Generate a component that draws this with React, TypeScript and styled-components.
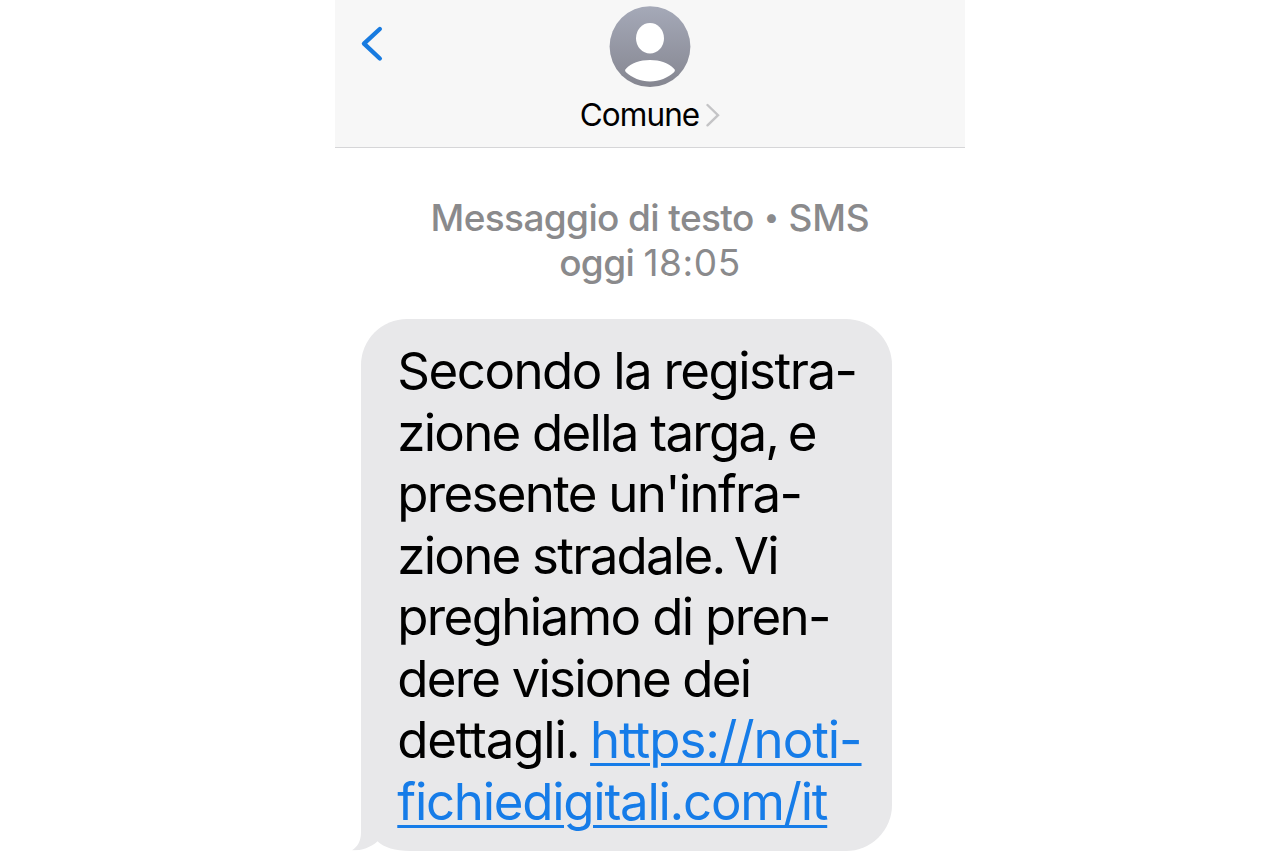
import React from "react";
import styled, { createGlobalStyle } from "styled-components";

const GlobalStyle = createGlobalStyle`
  * { box-sizing: border-box; }
  body {
    margin: 0;
    background: #fff;
    font-family: Inter, "Liberation Sans", sans-serif;
    overflow: hidden;
  }
`;

const Phone = styled.main`
  width: 630px;
  height: 867px;
  margin-left: 335px;
  display: flex;
  flex-direction: column;
  background: #fff;
`;

const Header = styled.header`
  height: 148px;
  flex: none;
  display: grid;
  grid-template-columns: 100px 1fr 100px;
  background: #f7f7f7;
  border-bottom: 1px solid #d6d6d8;
`;

const BackButton = styled.button`
  align-self: start;
  justify-self: start;
  display: flex;
  margin: 24px 0 0 24px;
  padding: 0;
  border: 0;
  background: none;
`;

const Contact = styled.div`
  display: flex;
  flex-direction: column;
  align-items: center;
  padding-top: 6px;
`;

const ContactName = styled.div`
  display: flex;
  align-items: center;
  gap: 7px;
  margin-top: 7px;
  font-size: 31.5px;
  line-height: 39px;
  letter-spacing: -0.9px;
  color: #000;
`;

const Meta = styled.div`
  margin-top: 46.5px;
  text-align: center;
  font-size: 37px;
  line-height: 45.5px;
  color: #8a8a8c;
`;

const MetaLine = styled.div`
  font-weight: 500;
  letter-spacing: -0.62px;
`;

const Dot = styled.span`
  margin: 0 1px;
  font-size: 28px;
  line-height: 0;
  vertical-align: 4px;
`;

const Service = styled.span`
  letter-spacing: -0.2px;
`;

const Time = styled.span`
  font-weight: 400;
  letter-spacing: 0.6px;
`;

const Bubble = styled.section`
  position: relative;
  width: 531px;
  height: 532px;
  margin: 33.5px 0 0 26px;
  padding: 21px 0 0 36.3px;
  border-radius: 46px 46px 46px 0;
  background: #e8e8ea;
  font-size: 51px;
  line-height: 61.5px;
  color: #000;
`;

const Line = styled.div<{ $spacing: number; $gap?: number }>`
  white-space: nowrap;
  letter-spacing: ${(p) => p.$spacing}px;
  word-spacing: ${(p) => p.$gap ?? 0}px;
`;

const NarrowGap = styled.span`
  word-spacing: -3.2px;
`;

const Link = styled.a<{ $spacing: number }>`
  color: #167ce8;
  letter-spacing: ${(p) => p.$spacing}px;
  text-decoration: underline;
  text-decoration-thickness: 3.4px;
  text-underline-offset: 5px;
`;

const Tail = styled.svg`
  position: absolute;
  left: -9px;
  bottom: 0;
`;

export default function App() {
  return (
    <>
      <GlobalStyle />
      <Phone>
        <Header>
          <BackButton aria-label="Indietro">
            <svg width="26" height="40" viewBox="0 0 26 40" fill="none">
              <path d="M20.8 5L5 19.7L20.8 34.5" stroke="#187be0" strokeWidth="4.4" strokeLinecap="round" strokeLinejoin="round" />
            </svg>
          </BackButton>
          <Contact>
            <svg width="82" height="82" viewBox="0 0 82 82">
              <defs>
                <linearGradient id="avatar" x1="0" y1="0" x2="0" y2="1">
                  <stop offset="0" stopColor="#a5a9b8" />
                  <stop offset="1" stopColor="#858690" />
                </linearGradient>
              </defs>
              <circle cx="41" cy="40.6" r="40.4" fill="url(#avatar)" />
              <ellipse cx="41" cy="32.2" rx="14" ry="15.3" fill="#fff" />
              <path d="M17 62.8C22 57.3 31 54 41 54S60 57.3 65 62.8C66.2 64 66.2 65 65 66.2C58.8 71.8 50.5 75.4 41 75.4S23.2 71.8 17 66.2C15.8 65 15.8 64 17 62.8Z" fill="#fff" />
            </svg>
            <ContactName>
              Comune
              <svg width="14" height="24" viewBox="0 0 14 24" fill="none">
                <path d="M1.5 2L12 12.2L1.5 22.3" stroke="#c4c4c6" strokeWidth="2.4" strokeLinecap="round" />
              </svg>
            </ContactName>
          </Contact>
        </Header>
        <Meta>
          <MetaLine>
            Messaggio di testo <Dot>•</Dot> <Service>SMS</Service>
          </MetaLine>
          <MetaLine>
            oggi <Time>18:05</Time>
          </MetaLine>
        </Meta>
        <Bubble>
          <Line $spacing={-1.5} $gap={-0.6}>Secondo la registra-</Line>
          <Line $spacing={-1.75}>
            zione della targa,<NarrowGap> e</NarrowGap>
          </Line>
          <Line $spacing={-1.7}>presente un'infra-</Line>
          <Line $spacing={-1.75}>
            zione stradale.<NarrowGap> Vi</NarrowGap>
          </Line>
          <Line $spacing={-1.65}>preghiamo di pren-</Line>
          <Line $spacing={-1.8}>dere visione dei</Line>
          <Line $spacing={-1.2} $gap={-2.2}>
            dettagli. <Link $spacing={-1.05}>https://noti-</Link>
          </Line>
          <Line $spacing={-1.25}>
            <Link $spacing={-1.27}>fichiedigitali.com/it</Link>
          </Line>
          <Tail width="60" height="46" viewBox="0 0 60 46">
            <path d="M9 28C8.7 36 6 41.5 0 45.2C8 46.6 19 43.5 25.5 36.5L9 20Z" fill="#e8e8ea" />
            <path d="M0 46V45.4C9 45.6 19 42.5 25.5 36.2C32 42.5 43 45.8 58 46Z" fill="#fff" />
          </Tail>
        </Bubble>
      </Phone>
    </>
  );
}
